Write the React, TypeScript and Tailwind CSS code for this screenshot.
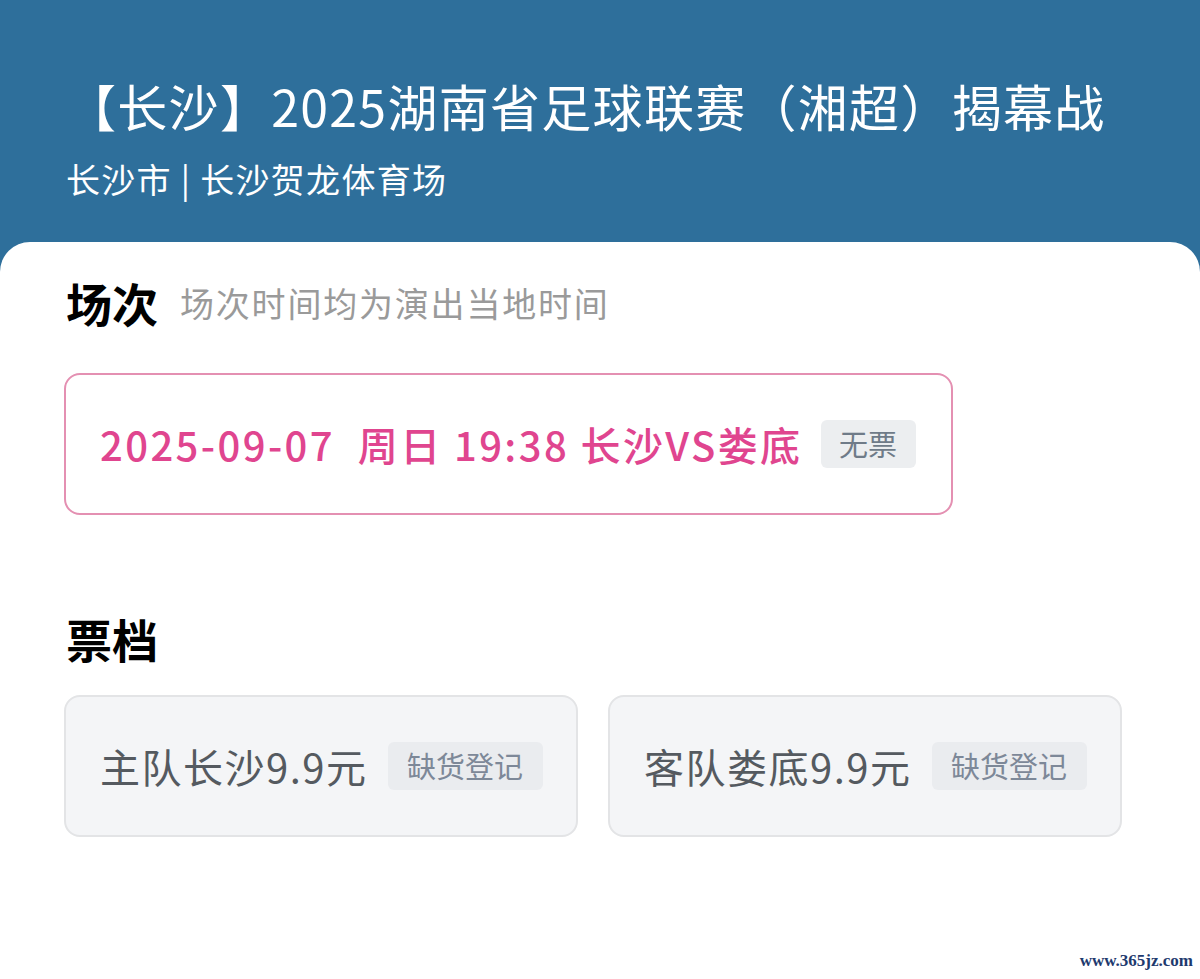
const cjk = "font-['Noto_Sans_CJK_SC','Noto_Sans',sans-serif]"

function TicketCard({ name }: { name: string }) {
  return (
    <div className="flex h-[142px] items-center gap-5 rounded-[16px] border-2 border-[#e3e4e6] bg-[#f4f5f7] pl-[34px]">
      <span className="text-[40px] leading-none tracking-[1.5px] text-[#555a60]">{name}</span>
      <span className="flex h-[48px] w-[155px] items-center justify-center rounded-[6px] bg-[#eaecef] text-[29px] text-[#7d8898]">
        缺货登记
      </span>
    </div>
  )
}

export default function App() {
  return (
    <div className={`relative flex min-h-[979px] flex-col bg-[#2e6f9b] ${cjk}`}>
      {/* Header */}
      <div className="px-[66px] pt-[75px] pb-[43px] text-white">
        <h1 className="text-[50px] leading-[60px] font-normal tracking-[1.3px]">
          【长沙】2025湖南省足球联赛（湘超）揭幕战
        </h1>
        <p className="mt-[23px] text-[34px] leading-[41px] tracking-[1.3px]">长沙市 | 长沙贺龙体育场</p>
      </div>

      {/* Panel */}
      <div className="flex-1 rounded-t-[30px] bg-white px-[64px] pt-[34px]">
        <div className="flex items-center">
          <span className="pl-[2px] text-[46px] leading-[53px] font-bold text-black">场次</span>
          <span className="ml-[22px] text-[34px] tracking-[1.8px] text-[#9a9a9a]">场次时间均为演出当地时间</span>
        </div>

        <div className="mt-[44px] flex h-[142px] w-[889px] items-center gap-[18px] rounded-[16px] border-2 border-[#e490b2] pl-[34px]">
          <span className="text-[40px] leading-none font-medium tracking-[2.4px] whitespace-pre text-[#e0458f]">
            2025-09-07  周日 19:38 长沙VS娄底
          </span>
          <span className="flex h-[48px] w-[95px] items-center justify-center rounded-[6px] bg-[#eceef0] text-[29px] text-[#6f7b88]">
            无票
          </span>
        </div>

        <div className="mt-[97px] pl-[2px] text-[46px] leading-[53px] font-bold text-black">票档</div>

        <div className="mt-[30px] grid w-[1058px] grid-cols-2 gap-[30px]">
          <TicketCard name="主队长沙9.9元" />
          <TicketCard name="客队娄底9.9元" />
        </div>
      </div>

      <span className="absolute right-[7px] bottom-[6px] font-['Liberation_Serif',serif] text-[17px] font-bold text-[#1e3a6e]">
        www.365jz.com
      </span>
    </div>
  )
}
